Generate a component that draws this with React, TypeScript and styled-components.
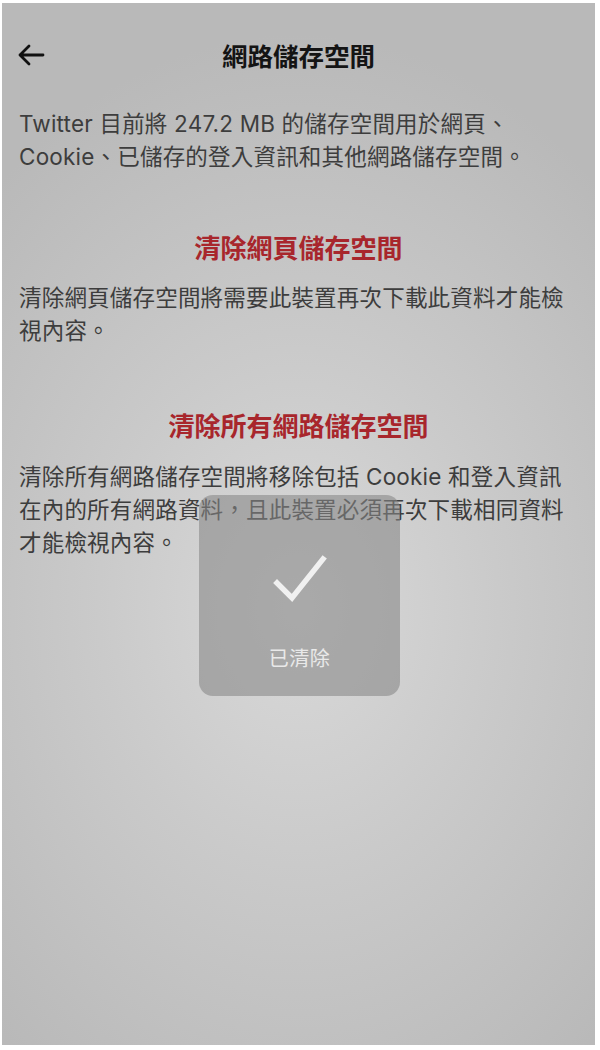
import React from 'react'
import styled, { createGlobalStyle } from 'styled-components'

const GlobalStyle = createGlobalStyle`
  html, body {
    margin: 0;
    padding: 0;
    background: #ffffff;
  }
  body {
    font-family: "Inter", "Noto Sans CJK TC", sans-serif;
  }
`

const Screen = styled.div`
  position: relative;
  box-sizing: border-box;
  width: 593px;
  height: 1042px;
  margin: 3px 0 0 2px;
  background: radial-gradient(ellipse 75% 55% at 50% 58%, #d9d9d9 0%, #cacaca 45%, #b9b9b9 100%);
  overflow: hidden;
`

const Header = styled.div`
  display: flex;
  align-items: center;
  justify-content: center;
  position: relative;
  height: 40px;
  margin-top: 31px;
`

const BackButton = styled.div`
  position: absolute;
  left: 15px;
  top: 7px;
  width: 30px;
  height: 28px;
  display: flex;
  align-items: center;
`

const Title = styled.h1`
  margin: 0;
  font-family: "Noto Sans CJK TC", sans-serif;
  font-size: 25.5px;
  font-weight: 700;
  color: #141414;
`

const Body = styled.div`
  padding: 0 17px;
`

const Paragraph = styled.p<{ $top: number }>`
  margin: ${({ $top }) => $top}px 0 0;
  font-size: 22.5px;
  line-height: 33px;
  color: #3d3d3d;
  letter-spacing: 0.2px;
`

const SectionTitle = styled.h2<{ $top: number }>`
  margin: ${({ $top }) => $top}px 0 0;
  text-align: center;
  font-family: "Noto Sans CJK TC", sans-serif;
  font-size: 26px;
  line-height: 36px;
  font-weight: 700;
  color: #a8262c;
`

const Toast = styled.div`
  position: absolute;
  left: 197px;
  top: 492px;
  width: 201px;
  height: 201px;
  border-radius: 14px;
  background: rgba(135, 135, 135, 0.58);
  display: flex;
  flex-direction: column;
  align-items: center;
`

const CheckWrap = styled.div`
  margin-top: 60px;
  height: 48px;
  display: flex;
  align-items: center;
`

const ToastLabel = styled.div`
  margin-top: 40px;
  font-family: "Noto Sans CJK TC", sans-serif;
  font-size: 20px;
  color: #e9e9e9;
  letter-spacing: 0.5px;
`

export default function App() {
  return (
    <>
      <GlobalStyle />
      <Screen>
        <Header>
          <BackButton>
            <svg width="28" height="22" viewBox="0 0 28 22">
              <path d="M26 11H3M12 2L3 11l9 9" fill="none" stroke="#111" strokeWidth="2.8" strokeLinecap="round" strokeLinejoin="round" />
            </svg>
          </BackButton>
          <Title>網路儲存空間</Title>
        </Header>
        <Body>
          <Paragraph $top={33}>
            Twitter 目前將 247.2 MB 的儲存空間用於網頁、
            <br />
            Cookie、已儲存的登入資訊和其他網路儲存空間。
          </Paragraph>
          <SectionTitle $top={56}>清除網頁儲存空間</SectionTitle>
          <Paragraph $top={16}>清除網頁儲存空間將需要此裝置再次下載此資料才能檢視內容。</Paragraph>
          <SectionTitle $top={60}>清除所有網路儲存空間</SectionTitle>
          <Paragraph $top={17}>
            清除所有網路儲存空間將移除包括 Cookie 和登入資訊在內的所有網路資料，且此裝置必須再次下載相同資料才能檢視內容。
          </Paragraph>
        </Body>
        <Toast>
          <CheckWrap>
            <svg width="54" height="48" viewBox="0 0 54 48">
              <path d="M4 28l15 15L50 4" fill="none" stroke="#f0f0f0" strokeWidth="5.5" strokeLinecap="square" strokeLinejoin="miter" />
            </svg>
          </CheckWrap>
          <ToastLabel>已清除</ToastLabel>
        </Toast>
      </Screen>
    </>
  )
}
